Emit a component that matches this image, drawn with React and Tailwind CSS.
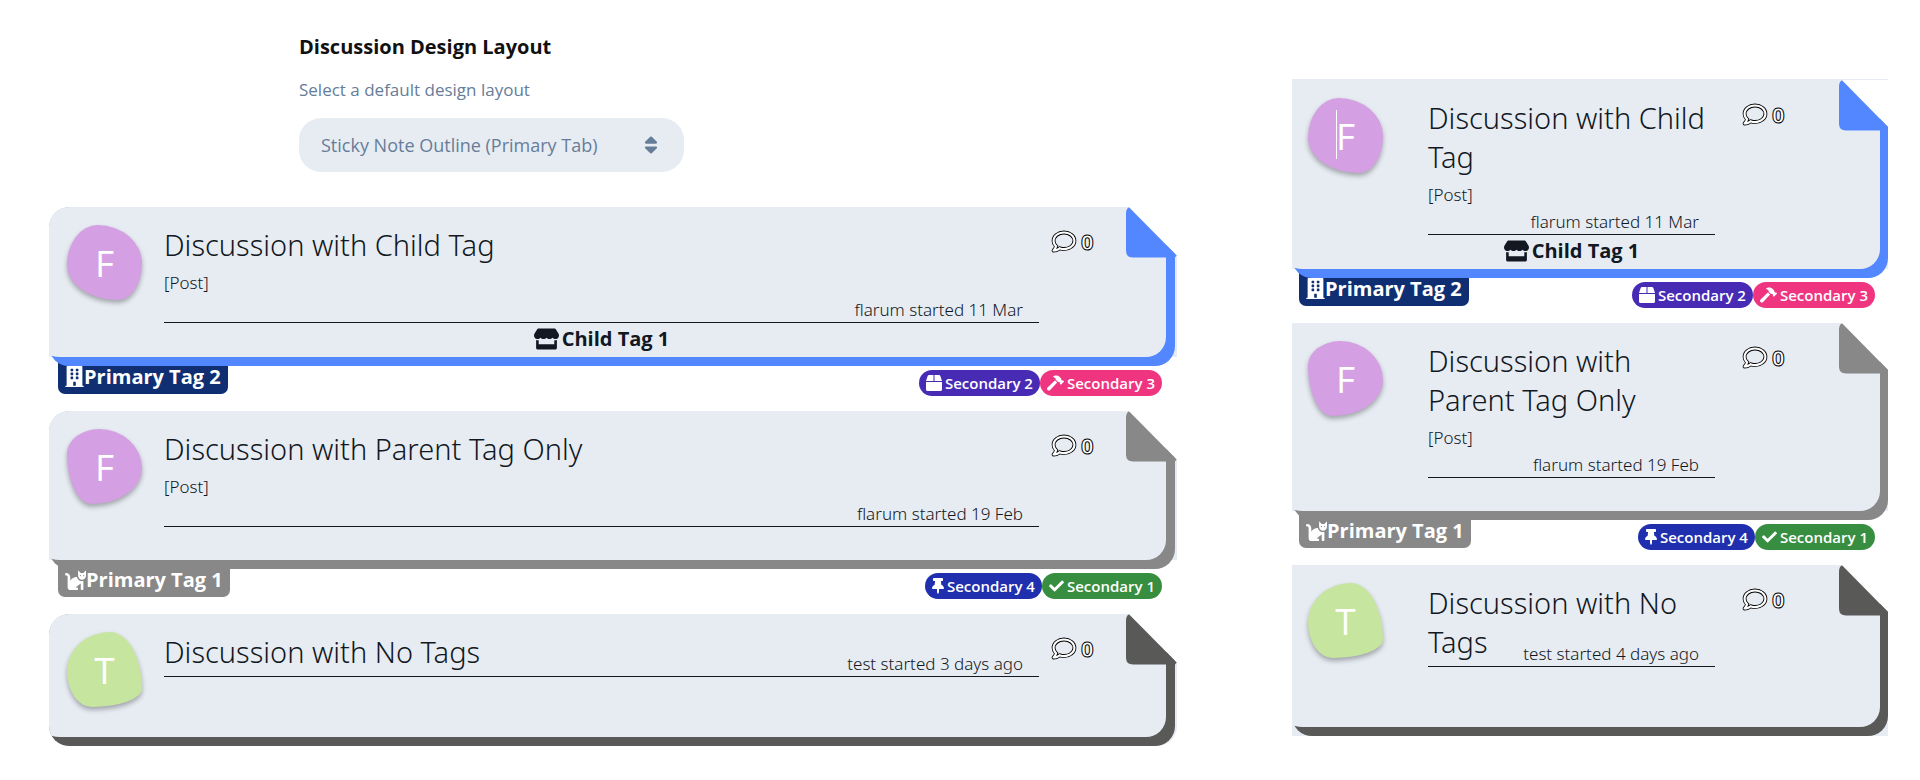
import React from "react";
import {
  FaBox,
  FaBuilding,
  FaCat,
  FaCheck,
  FaHammer,
  FaRegComment,
  FaSort,
  FaStore,
  FaThumbtack,
} from "react-icons/fa";

const BLOB_A = "rounded-[41%_59%_32%_68%/53%_51%_49%_47%]";
const BLOB_B = "rounded-[43%_57%_67%_33%/33%_52%_48%_67%]";
const BLOB_C = "rounded-[57%_43%_67%_33%/52%_75%_25%_48%]";

const discussions = [
  {
    id: "child",
    title: "Discussion with Child Tag",
    post: "[Post]",
    info: { wide: "flarum started 11 Mar", narrow: "flarum started 11 Mar" },
    initial: "F",
    avatar: `bg-[#d59fe3] ${BLOB_A}`,
    accent: "bg-[#5287ff]",
    fold: "fill-[#5287ff]",
    pad: "pb-[5px]",
    child: "Child Tag 1",
    primary: { label: "Primary Tag 2", Icon: FaBuilding, size: "w-[19px]", color: "bg-[#102f73]" },
    secondary: [
      { label: "Secondary 2", Icon: FaBox, size: "w-4", color: "bg-[#472bb5]" },
      { label: "Secondary 3", Icon: FaHammer, size: "w-[17px]", color: "bg-[#ef3480]" },
    ],
  },
  {
    id: "parent",
    title: "Discussion with Parent Tag Only",
    post: "[Post]",
    info: { wide: "flarum started 19 Feb", narrow: "flarum started 19 Feb" },
    initial: "F",
    avatar: `bg-[#d59fe3] ${BLOB_B}`,
    accent: "bg-[#888888]",
    fold: "fill-[#888888]",
    pad: "pb-[33px]",
    primary: { label: "Primary Tag 1", Icon: FaCat, size: "w-[21px]", color: "bg-[#888888]" },
    secondary: [
      { label: "Secondary 4", Icon: FaThumbtack, size: "w-3", color: "bg-[#202fae]" },
      { label: "Secondary 1", Icon: FaCheck, size: "w-[15px]", color: "bg-[#388e40]" },
    ],
  },
  {
    id: "none",
    title: "Discussion with No Tags",
    info: { wide: "test started 3 days ago", narrow: "test started 4 days ago" },
    initial: "T",
    avatar: `bg-[#c6e59f] ${BLOB_C}`,
    accent: "bg-[#595957]",
    fold: "fill-[#595957]",
    pad: "pb-[60px]",
  },
];

function Fold({ className, position }) {
  return (
    <svg
      aria-hidden="true"
      viewBox="0 0 51 51"
      className={`absolute top-0 h-[51px] w-[51px] ${position}`}
    >
      <path d="M2 -1H52V50Z" fill="#fff" />
      <path
        className={className}
        d="M0 7C0 3 1.5 .5 3.2 .5L50.7 48.6L49 50.6H7Q0 50.6 0 43.6Z"
      />
    </svg>
  );
}

function Discussion({ item, narrow, caret }) {
  const { title, post, info, initial, child, primary, secondary } = item;
  const last = !primary;
  let backdrop =
    "bg-[linear-gradient(#e7ecf3,#e7ecf3)] bg-[length:100%_calc(100%-9px)] bg-no-repeat";
  if (last) backdrop = "bg-[#e7ecf3]";
  let corners = "";
  if (!narrow) corners = last ? "rounded-l-[20px] rounded-br-[20px]" : "rounded-tl-[20px]";

  return (
    <li>
      <article className={`relative z-10 overflow-hidden ${backdrop} ${corners}`}>
        <div
          className={`rounded-b-[20px] ${item.accent} ${narrow ? "pr-2" : "mr-0.5 rounded-tl-[21px] pr-[9px]"} pb-[9px]`}
        >
          <div
            className={`flex items-start rounded-br-[20px] rounded-bl-[11px_3px] bg-[#e7ecf3] pt-[18px] ${narrow ? "pl-4" : "pl-[18px]"}`}
          >
            <div
              className={`relative flex h-[75px] w-[75px] shrink-0 items-center justify-center text-[37px] leading-none text-white shadow-[0_3px_5px_rgba(0,0,0,0.3)] ${narrow ? "mr-[45px]" : "mr-[22px]"} ${item.avatar}`}
            >
              {caret && <span className="absolute top-3 left-7 h-[49px] w-px bg-white" />}
              {initial}
            </div>
            <div className={`min-w-0 flex-1 ${item.pad}`}>
              <div className="border-b border-[#111822] font-['Noto_Sans','Open_Sans',sans-serif] font-[350]">
                <h3 className="text-[29px] leading-[39px]">
                  <a href={`#${item.id}`}>{title}</a>
                </h3>
                {post && <p className="mt-[7px] text-[17px] leading-6">{post}</p>}
                <p
                  className={`mr-4 ml-auto w-fit text-[17px] leading-6 ${post ? "mt-[3px]" : "-mt-[19px]"}`}
                >
                  {narrow ? info.narrow : info.wide}
                </p>
              </div>
              {child && (
                <a
                  href="#child-tag"
                  className="mt-0.5 flex items-center justify-center gap-[3px] text-[20px] leading-[27px] font-bold"
                >
                  <FaStore className="h-[22px] w-[25px]" />
                  {child}
                </a>
              )}
            </div>
            <div
              className={`mt-[3px] flex h-[26px] shrink-0 items-center gap-[5px] text-[22px] leading-[26px] ${narrow ? "w-[165px] pl-7" : "w-[127px] pl-[13px]"}`}
            >
              <FaRegComment className="h-[23px] w-6 overflow-visible fill-white stroke-black [paint-order:stroke] [stroke-width:38px]" />
              <span className="font-bold text-white [-webkit-text-stroke:1px_#000]">0</span>
            </div>
          </div>
        </div>
        <Fold className={item.fold} position={narrow ? "-right-0.5" : "right-0"} />
      </article>
      {primary && (
        <div
          className={`mb-[15px] flex h-[30px] items-start justify-between ${narrow ? "pr-[13px] pl-[7px]" : "pr-[15px] pl-[9px]"}`}
        >
          <a
            href="#primary"
            className={`-mt-[9px] flex items-center rounded-b-[7px] px-[7px] pt-1.5 pb-1 text-[20px] leading-[27px] font-bold text-white ${primary.color}`}
          >
            <primary.Icon className={`h-[21px] ${primary.size}`} />
            {primary.label}
          </a>
          <div className="flex pt-1">
            {secondary.map(({ label, Icon, size, color }) => (
              <a
                key={label}
                href="#secondary"
                className={`flex h-[26px] items-center gap-[3px] rounded-full px-[7px] text-[15px] font-semibold text-white ${color}`}
              >
                <Icon className={`h-4 ${size}`} />
                {label}
              </a>
            ))}
          </div>
        </div>
      )}
    </li>
  );
}

export default function App() {
  return (
    <main className="grid grid-cols-[1128fr_596fr] items-start gap-x-[115px] bg-white pr-8 pl-[49px] font-['Open_Sans','Noto_Sans',sans-serif] text-[#111822]">
      <section>
        <form className="pt-[33px] pl-[250px]">
          <label htmlFor="layout" className="block text-[20px] leading-7 font-bold text-[#111]">
            Discussion Design Layout
          </label>
          <p id="layout-help" className="mt-[15px] text-[17px] leading-7 text-[#667d99]">
            Select a default design layout
          </p>
          <div className="relative mt-3.5 w-[385px]">
            <select
              id="layout"
              aria-describedby="layout-help"
              className="h-[54px] w-full appearance-none rounded-[22px] bg-[#e7ecf3] px-[22px] text-[18px] text-[#667d99]"
            >
              <option>Sticky Note Outline (Primary Tab)</option>
            </select>
            <FaSort className="pointer-events-none absolute top-4 right-[23px] h-[22px] w-[20px] text-[#667d99]" />
          </div>
        </form>
        <ul className="mt-[35px]">
          {discussions.map((item) => (
            <Discussion key={item.id} item={item} />
          ))}
        </ul>
      </section>
      <section className="pt-[79px]">
        <ul className="border-t border-[#e7ecf3]">
          {discussions.map((item, i) => (
            <Discussion key={item.id} item={item} narrow caret={i === 0} />
          ))}
        </ul>
      </section>
    </main>
  );
}
